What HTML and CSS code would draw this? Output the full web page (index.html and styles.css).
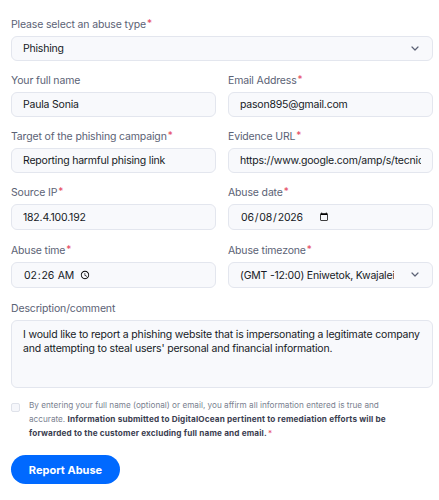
FILE: index.html
```html
<!DOCTYPE html>
<html lang="en">
<head>
<meta charset="utf-8">
<title>Report Abuse</title>
<link rel="stylesheet" href="styles.css">
</head>
<body>
<form class="form">
  <div class="field">
    <label class="label">Please select an abuse type<span class="req">*</span></label>
    <div class="select-wrap">
      <select class="control select"><option>Phishing</option></select>
      <svg class="chev" viewBox="0 0 8 5" width="8" height="5"><path d="M1 1l3 3 3-3" fill="none" stroke="#5b6275" stroke-width="1.2" stroke-linecap="round" stroke-linejoin="round"/></svg>
    </div>
  </div>
  <div class="row">
    <div class="field">
      <label class="label">Your full name</label>
      <input class="control" type="text" value="Paula Sonia">
    </div>
    <div class="field">
      <label class="label">Email Address<span class="req">*</span></label>
      <input class="control" type="text" value="pason895@gmail.com">
    </div>
  </div>
  <div class="row">
    <div class="field">
      <label class="label">Target of the phishing campaign<span class="req">*</span></label>
      <input class="control" type="text" value="Reporting harmful phising link">
    </div>
    <div class="field">
      <label class="label">Evidence URL<span class="req">*</span></label>
      <input class="control" type="text" value="https://www.google.com/amp/s/tecnicalnews">
    </div>
  </div>
  <div class="row row-tall">
    <div class="field">
      <label class="label">Source IP<span class="req">*</span></label>
      <input class="control tall" type="text" value="182.4.100.192">
    </div>
    <div class="field">
      <label class="label">Abuse date<span class="req">*</span></label>
      <div class="control tall box">
        <input class="native date" type="date" value="2026-06-08">
      </div>
    </div>
  </div>
  <div class="row row-tall">
    <div class="field">
      <label class="label">Abuse time<span class="req">*</span></label>
      <div class="control tall box">
        <input class="native time" type="time" value="02:26">
      </div>
    </div>
    <div class="field">
      <label class="label">Abuse timezone<span class="req">*</span></label>
      <div class="select-wrap">
        <select class="control select tall"><option>(GMT -12:00) Eniwetok, Kwajalein</option></select>
        <svg class="chev" viewBox="0 0 8 5" width="8" height="5"><path d="M1 1l3 3 3-3" fill="none" stroke="#5b6275" stroke-width="1.2" stroke-linecap="round" stroke-linejoin="round"/></svg>
      </div>
    </div>
  </div>
  <div class="field desc">
    <label class="label">Description/comment</label>
    <textarea class="control area">I would like to report a phishing website that is impersonating a legitimate company and attempting to steal users' personal and financial information.</textarea>
  </div>
  <div class="consent">
    <span class="check"></span>
    <p class="consent-text">By entering your full name (optional) or email, you affirm all information entered is true and accurate. <b>Information submitted to DigitalOcean pertinent to remediation efforts will be forwarded to the customer excluding full name and email.<span class="req-inline">*</span></b></p>
  </div>
  <button type="button" class="btn">Report Abuse</button>
</form>
</body>
</html>
```
FILE: styles.css
```css
* { box-sizing: border-box; }
html, body { margin: 0; background: #ffffff; }
body {
  font-family: Inter, "Noto Sans", sans-serif;
  color: #161a25;
  padding: 18px 6px 0 11px;
}
.form { width: 422px; display: flex; flex-direction: column; }
.row { display: grid; grid-template-columns: 205px 205px; column-gap: 12px; }
.field { display: flex; flex-direction: column; margin-bottom: 13px; }
.row-tall .field { margin-bottom: 14px; }
.label {
  display: block;
  height: 14px;
  font-size: 10.5px;
  letter-spacing: -0.15px;
  line-height: 14px;
  color: #5b6275;
  margin-bottom: 4px;
}
.req { color: #e5485f; font-size: 10px; line-height: 0; position: relative; top: -1px; margin-left: 1px; }
.req-inline { color: #e5485f; font-weight: 400; margin-left: 1px; }
.control {
  font-family: Inter, "Noto Sans", sans-serif;
  font-size: 10.5px;
  letter-spacing: -0.2px;
  color: #161a25;
  height: 25px;
  width: 100%;
  border: 1px solid #e3e6ee;
  background: #f8f9fc;
  border-radius: 6px;
  padding: 0 11px;
  outline: none;
  margin: 0;
}
.tall { height: 26px; }
.box { display: flex; align-items: center; }
.native {
  font-family: Inter, "Noto Sans", sans-serif;
  font-size: 10.5px;
  letter-spacing: -0.2px;
  color: #161a25;
  border: none;
  background: transparent;
  padding: 0;
  margin: 0;
  outline: none;
  height: 20px;
}
.time { width: 67px; }
.time::-webkit-calendar-picker-indicator {
  margin: 0 0 0 4px;
  padding: 0;
  width: 10px;
  height: 10px;
}
.date { width: 91px; }
.select-wrap { position: relative; }
.select { appearance: none; -webkit-appearance: none; padding-right: 38px; }
.chev { position: absolute; right: 14px; top: 10px; pointer-events: none; }
.desc { margin-bottom: 11px; }
.area {
  height: 68px;
  padding: 7px 11px;
  line-height: 14px;
  resize: none;
  letter-spacing: -0.18px;
}
.consent { display: flex; gap: 9px; }
.check {
  flex: none;
  width: 9px; height: 9px;
  border: 1px solid #dfe2ea;
  background: #f6f7fb;
  border-radius: 2px;
  margin-top: 4px;
}
.consent-text {
  margin: 0;
  width: 372px;
  font-size: 8.2px;
  line-height: 13.8px;
  color: #7a7f90;
}
.consent-text b { color: #3b4050; font-weight: 700; letter-spacing: 0.15px; }
.btn {
  margin-top: 15px;
  align-self: flex-start;
  width: 109px;
  height: 29px;
  border: none;
  border-radius: 15px;
  background: #0069ff;
  color: #ffffff;
  font-family: Inter, "Noto Sans", sans-serif;
  font-size: 11px;
  font-weight: 700;
}
```
